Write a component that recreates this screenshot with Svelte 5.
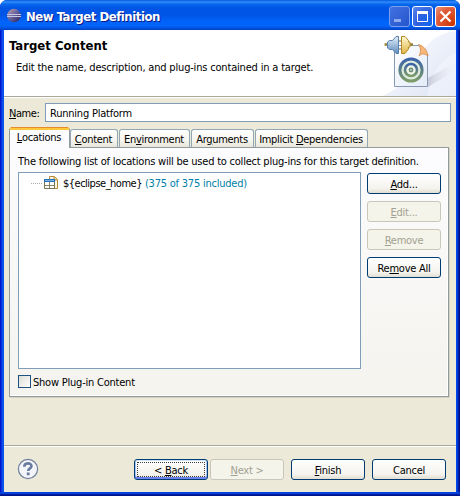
<script>
  const tabs = [
    { pre: '', key: 'L', post: 'ocations', width: 61, active: true },
    { pre: '', key: 'C', post: 'ontent', width: 48 },
    { pre: 'En', key: 'v', post: 'ironment', width: 71 },
    { pre: 'Ar', key: 'g', post: 'uments', width: 63 },
    { pre: 'Implicit ', key: 'D', post: 'ependencies', width: 113 }
  ];
  const actions = [
    { pre: '', key: 'A', post: 'dd...' },
    { pre: '', key: 'E', post: 'dit...', disabled: true },
    { pre: '', key: 'R', post: 'emove', disabled: true },
    { pre: 'Re', key: 'm', post: 'ove All' }
  ];
</script>

{#snippet label(t)}<span class="label">{t.pre}{#if t.key}<span class="key">{t.key}</span>{/if}{t.post}</span>{/snippet}

<div class="window">
  <div class="titlebar">
    <svg class="logo" width="16" height="16" viewBox="0 0 16 16">
      <defs><linearGradient id="globe" x1="0" y1="0" x2="1" y2="1"><stop offset="0" stop-color="#c5a3a8" /><stop offset=".45" stop-color="#6a669f" /><stop offset="1" stop-color="#272057" /></linearGradient></defs>
      <circle cx="7" cy="7.500" r="6.800" fill="url(#globe)" />
      <path d="M0 6.500h14M0 8.500h14" stroke="#c5c5e6" stroke-width="1" />
    </svg>
    <span class="title">New Target Definition</span>
    <div class="controls">
      <span class="ctl dim"><svg width="19" height="19"><path d="M4 13.500h7" stroke="#8fa9ef" stroke-width="3" /></svg></span>
      <span class="ctl"><svg width="19" height="19"><path d="M4.500 4.500h10v10h-10z" fill="none" stroke="#fff" /><path d="M4 5.500h11" stroke="#fff" stroke-width="3" /></svg></span>
      <span class="ctl close"><svg width="19" height="19"><path d="M4.500 4.500l10 10M14.500 4.500l-10 10" stroke="#fff" stroke-width="2.200" /></svg></span>
    </div>
  </div>

  <div class="client">
    <header>
      <div class="heading">
        <h1>Target Content</h1>
        <p>Edit the name, description, and plug-ins contained in a target.</p>
      </div>
      <svg class="banner" width="76" height="66" viewBox="380 30 76 66">
        <defs>
          <linearGradient id="sky" x1="0" y1="0" x2="1" y2="1"><stop offset="0" stop-color="#fff" /><stop offset="1" stop-color="#dce3f5" /></linearGradient>
          <linearGradient id="page" x1="0" y1="0" x2="1" y2="1"><stop offset="0" stop-color="#fff" /><stop offset="1" stop-color="#e2ebf8" /></linearGradient>
          <linearGradient id="ring" x1="0" y1="0" x2="0" y2="1"><stop offset="0" stop-color="#3b62aa" /><stop offset="1" stop-color="#7d9c68" /></linearGradient>
          <linearGradient id="shade"><stop offset="0" stop-color="#a7a9bd" stop-opacity=".5" /><stop offset="1" stop-color="#dfe2f0" stop-opacity="0" /></linearGradient>
          <linearGradient id="blue" x1="0" y1="0" x2="0" y2="1"><stop offset="0" stop-color="#e4f0fa" /><stop offset="1" stop-color="#5e8bbd" /></linearGradient>
          <linearGradient id="gold" x1="0" y1="0" x2="0" y2="1"><stop offset="0" stop-color="#fff8d0" /><stop offset="1" stop-color="#dfb646" /></linearGradient>
        </defs>
        <path d="M456 31Q428 34 418 61Q407 86 382 96H456Z" fill="url(#sky)" />
        <path d="M456 53Q433 62 427 96H456Z" fill="#fff" opacity=".35" />
        <path d="M428 87V78L456 62V70Z" fill="url(#shade)" />
        <path d="M394.500 45.500H419L427.500 55V86.500H394.500Z" fill="url(#page)" stroke="#8999b3" />
        <path d="M418.500 44.500C421 48 421 52 419 56 422 53 425 54 428 56 427 50 424 46 418.500 44.500Z" fill="#f7b779" stroke="#d28b4c" stroke-width=".8" />
        <circle cx="411" cy="70" r="11.100" fill="#dcebdc" stroke="url(#ring)" stroke-width="3" />
        <circle cx="411" cy="70" r="6" fill="#eff6e7" stroke="url(#ring)" stroke-width="2.600" />
        <circle cx="411" cy="70" r="2.400" fill="#6c8c78" /><circle cx="411" cy="70" r=".8" fill="#fff" />
        <path d="M384.500 44.500h4M409 44.500h4" stroke="#9a8436" stroke-width="2.400" />
        <path d="M387.500 42l2-1.500h3l3.500-4h2.500v17H396l-3.500-4h-3l-2-1.500Z" fill="url(#blue)" stroke="#5a80ad" />
        <path d="M401.500 36.500h3.500l3.500 4v1.500h1.500v5h-1.500v2l-3.500 4.500h-3.500Z" fill="url(#gold)" stroke="#b58a2c" />
        <path d="M399 41h2M399 49h2" stroke="#736d50" stroke-width="1" />
      </svg>
    </header>

    <div class="name">
      <span class="name-label"><span class="key">N</span>ame:</span>
      <div class="field">Running Platform</div>
    </div>

    <div class="tabs">
      {#each tabs as t}
        <div class="tab" class:active={t.active} style="width:{t.width}px">{@render label(t)}</div>
      {/each}
    </div>

    <section class="panel">
      <p class="intro">The following list of locations will be used to collect plug-ins for this target definition.</p>
      <div class="body">
        <div class="list">
          <div class="item">
            <span class="branch"></span>
            <svg width="16" height="16" viewBox="0 0 16 16">
              <path d="M5.500 13.500V1.500H10.500L13.500 4.500V13.500Z" fill="#fff8e4" stroke="#b88a35" />
              <path d="M10 2v3h3" fill="#f4d58d" stroke="#b88a35" />
              <path d="M.500 4.500h10v9H.500Z" fill="#fff" stroke="#7b7355" />
              <path d="M0 5.500h11" stroke="#2870b8" stroke-width="3" /><path d="M1 5.500h9" stroke="#77b0e5" />
              <path d="M1 10.500h9M5.500 7v6" stroke="#8a8265" />
            </svg>
            <span class="path">{'${eclipse_home}'}</span>
            <span class="count">(375 of 375 included)</span>
          </div>
        </div>
        <div class="actions">
          {#each actions as a}
            <div class="button" class:disabled={a.disabled}>{@render label(a)}</div>
          {/each}
        </div>
      </div>
      <div class="check"><span class="box"></span><span class="check-label">Show Plug-in Content</span></div>
    </section>

    <footer>
      <svg class="help" width="22" height="22" viewBox="0 0 22 22">
        <circle cx="11" cy="11" r="9.600" fill="#f4f5f8" stroke="#71809f" stroke-width="1.200" />
        <path d="M7.300 8.800C7.300 4.300 14.500 4.300 14.500 8.100C14.500 10.500 11.200 10.200 11.200 13" fill="none" stroke="#687aa0" stroke-width="2.600" />
        <path d="M11.200 14.500v2.800" stroke="#687aa0" stroke-width="2.800" />
      </svg>
      <div class="button default">{@render label({ pre: '< ', key: 'B', post: 'ack' })}</div>
      <div class="button disabled next">{@render label({ pre: '', key: 'N', post: 'ext >' })}</div>
      <div class="button finish">{@render label({ pre: '', key: 'F', post: 'inish' })}</div>
      <div class="button">{@render label({ pre: 'Cancel', key: '', post: '' })}</div>
    </footer>
  </div>
</div>

<style>
  :global(body) { margin: 0; background: #fff; }
  * { box-sizing: border-box; }
  svg { display: block; flex: none; }
  .window {
    width: 460px; height: 496px; padding: 0 4px 4px; overflow: hidden;
    border-radius: 7px 7px 0 0;
    background: linear-gradient(90deg, #0019cf 0 1px, #0831d9 1px 2px, #0a50ee 2px 4px, #0855dd 4px 456px, #0046e8 456px 457px, #003bda 457px 458px, #001ea0 458px 459px, #00138c 459px);
    box-shadow: inset 0 -1px #00138c, inset 0 -2px #001ea0, inset 0 -4px #0441d8;
    font: 11px/14px "DejaVu Sans Condensed", "DejaVu Sans", sans-serif;
    font-stretch: condensed; letter-spacing: -.22px; color: #000; white-space: nowrap;
  }
  .label { white-space: pre; }
  .titlebar {
    height: 30px; margin: 0 -4px; padding: 0 4px 0 7px; display: flex; align-items: center;
    background: linear-gradient(#0058dd 0, #348dfb 2px, #0869ed 4px, #0055e5 8px, #0055e6 15px, #0064fb 22px, #0263f8 26px, #004bd4 29px, #003dbd 30px);
  }
  .logo { margin-top: 2px; }
  .title { margin: 4px 0 0 3px; color: #fff; font: bold 13px/18px "DejaVu Sans Condensed", sans-serif; font-stretch: condensed; letter-spacing: -.46px; text-shadow: 1px 1px #0a1883; }
  .controls { display: flex; gap: 2px; margin: 3px 0 0 auto; }
  .ctl { display: block; width: 21px; height: 21px; border: 1px solid #fff; border-radius: 3px; background: radial-gradient(circle at 90% 90%, #1265ef, #2d61df 55%, #6189ee); }
  .ctl.dim { border-color: #7a9ef0; background: linear-gradient(135deg, #4271df, #2455cd); }
  .ctl.close { background: radial-gradient(circle at 90% 90%, #cc3605, #df5733 60%, #ec957d); }
  .client { height: 462px; background: #ece9d8; display: flex; flex-direction: column; }
  header { flex: none; height: 68px; background: #fff; display: flex; justify-content: space-between; border-bottom: 1px solid #fff; box-shadow: inset 0 -1px #aca899; }
  .heading { padding: 7px 0 0 5px; }
  h1 { margin: 0; font: bold 13px/17px "DejaVu Sans Condensed", sans-serif; font-stretch: condensed; letter-spacing: 0; }
  p { margin: 0; }
  .heading p { padding: 7px 0 0 7px; letter-spacing: -.18px; }
  .name { display: flex; align-items: center; margin-top: 5px; padding-left: 5px; }
  .name-label { width: 36px; padding-top: 2px; letter-spacing: -.45px; }
  .field { width: 406px; height: 19px; background: #fff; border: 1px solid #7f9db9; padding: 3px 0 0 4px; }
  .key { text-decoration: underline; text-decoration-thickness: 1px; text-underline-offset: 1px; }
  .tabs { display: flex; align-items: flex-end; height: 21px; margin: 5px 0 0 5px; position: relative; z-index: 1; }
  .tab { height: 18px; margin-right: 1px; margin-bottom: 1px; border: 1px solid #91a7b4; border-bottom: 0; border-radius: 3px 3px 0 0; background: linear-gradient(#fff, #f6f5ee 60%, #e8e6da); text-align: center; padding: 3px 1px 0 0; letter-spacing: -.3px; }
  .tab.active { height: 21px; margin: 0; border-color: #919b9c; border-top: 3px solid #ffc73c; background: #fcfcfe; padding-top: 1px; position: relative; }
  .tab.active::before { content: ""; position: absolute; left: 1px; right: 1px; top: -3px; height: 1px; background: #e68b2c; }
  .panel { width: 440px; height: 250px; margin: -1px 0 0 5px; border: 1px solid #919b9c; background: linear-gradient(#fcfcfe, #f4f3ee); box-shadow: inset -1px -1px #fff, 1px 1px #d5d2c3; padding: 7px 8px 6px; }
  .intro { height: 17px; }
  .body { display: flex; gap: 6px; }
  .list { flex: none; width: 343px; height: 197px; background: #fff; border: 1px solid #7f9db9; padding: 2px 0 0 12px; }
  .item { display: flex; align-items: center; height: 16px; }
  .branch { width: 12px; height: 1px; margin-right: 1px; background: repeating-linear-gradient(90deg, #aaa 0 1px, transparent 1px 2px); }
  .path { margin-left: 3px; padding-top: 2px; letter-spacing: -.5px; }
  .count { margin-left: 3px; padding-top: 2px; color: #0080a8; }
  .actions { display: flex; flex-direction: column; gap: 7px; padding-top: 1px; }
  .button { flex: none; width: 74px; height: 21px; border: 1px solid #003c74; border-radius: 3px; background: linear-gradient(#fff, #f4f3ee 75%, #e1ddd1); text-align: center; padding-top: 4px; line-height: 14px; letter-spacing: -.25px; }
  .disabled { color: #a1a192; border-color: #c9c7ba; background: #f5f4ea; }
  .default { box-shadow: inset 0 1px #cee7ff, inset 0 -2px #6982ee, inset 1px 0 #a9c5f5, inset -1px 0 #a9c5f5; position: relative; }
  .default::after { content: ""; position: absolute; inset: 2px; border: 1px dotted #433d38; }
  .check { display: flex; align-items: center; height: 13px; margin-top: 6px; }
  .box { width: 13px; height: 13px; border: 1px solid #1c5180; background: linear-gradient(135deg, #dcdcd7, #fff); }
  .check-label { margin-left: 2px; padding-top: 2px; }
  footer { display: flex; align-items: flex-start; height: 47px; margin-top: auto; padding: 13px 0 0 13px; border-top: 1px solid #aca899; box-shadow: inset 0 1px #fff; }
  .help { margin: -1px 95px 0 0; }
  .next { margin: 0 7px 0 2px; }
  .finish { margin-right: 7px; }
</style>
